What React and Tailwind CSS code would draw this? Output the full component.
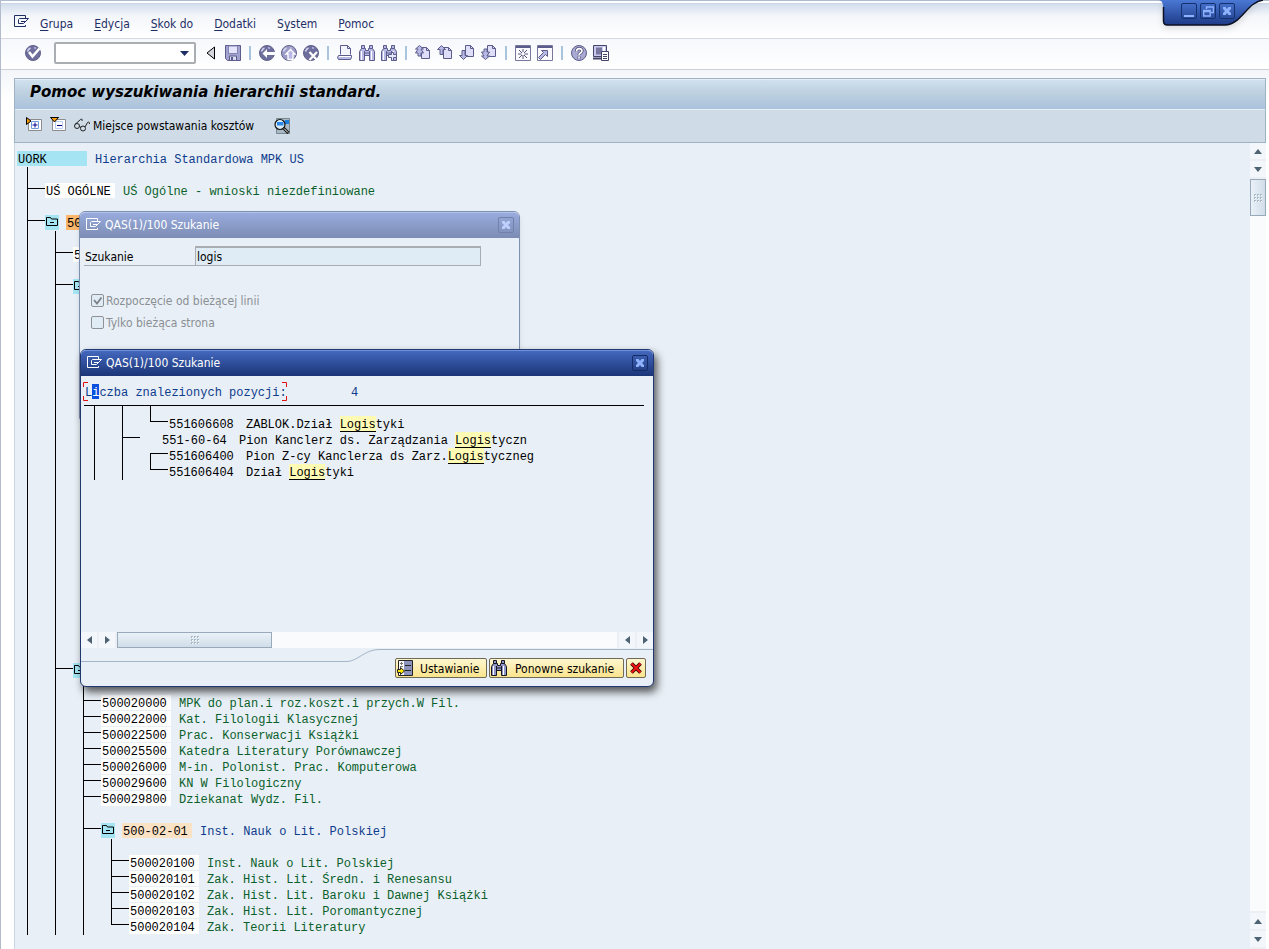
// src/App.jsx
import clsx from 'clsx'

/* ---------- data ---------- */

const MENU = ['Grupa', 'Edycja', 'Skok do', 'Dodatki', 'System', 'Pomoc']

// guides: '|' line, '+' branch, 'L' last branch, 'r' first branch, ' ' empty
const repeat = (n, row) => Array.from({ length: n }, () => row)

const TREE = [
  { guides: '', kind: 'root', code: 'UORK', text: 'Hierarchia Standardowa MPK US' },
  { guides: '|' },
  { guides: '+', kind: 'leaf', code: 'UŚ OGÓLNE', text: 'UŚ Ogólne - wnioski niezdefiniowane' },
  { guides: '|' },
  { guides: '+', kind: 'group', code: '50', tone: 'bg-[#fdb76c]' },
  { guides: '||' },
  { guides: '|+', kind: 'leaf', code: '5' },
  { guides: '||' },
  { guides: '|+', kind: 'group' },
  ...repeat(23, { guides: '||' }),
  { guides: '|+', kind: 'group' },
  { guides: '|||' },
  { guides: '||+', kind: 'leaf', code: '500020000', text: 'MPK do plan.i roz.koszt.i przych.W Fil.' },
  { guides: '||+', kind: 'leaf', code: '500022000', text: 'Kat. Filologii Klasycznej' },
  { guides: '||+', kind: 'leaf', code: '500022500', text: 'Prac. Konserwacji Książki' },
  { guides: '||+', kind: 'leaf', code: '500025500', text: 'Katedra Literatury Porównawczej' },
  { guides: '||+', kind: 'leaf', code: '500026000', text: 'M-in. Polonist. Prac. Komputerowa' },
  { guides: '||+', kind: 'leaf', code: '500029600', text: 'KN W Filologiczny' },
  { guides: '||+', kind: 'leaf', code: '500029800', text: 'Dziekanat Wydz. Fil.' },
  { guides: '|||' },
  { guides: '||+', kind: 'group', code: '500-02-01', text: 'Inst. Nauk o Lit. Polskiej' },
  { guides: '||||' },
  { guides: '|||+', kind: 'leaf', code: '500020100', text: 'Inst. Nauk o Lit. Polskiej' },
  { guides: '|||+', kind: 'leaf', code: '500020101', text: 'Zak. Hist. Lit. Średn. i Renesansu' },
  { guides: '|||+', kind: 'leaf', code: '500020102', text: 'Zak. Hist. Lit. Baroku i Dawnej Książki' },
  { guides: '|||+', kind: 'leaf', code: '500020103', text: 'Zak. Hist. Lit. Poromantycznej' },
  { guides: '|||L', kind: 'leaf', code: '500020104', text: 'Zak. Teorii Literatury' },
]

const HITS = [
  { guides: '||L', code: '551606608', before: 'ZABLOK.Dział ', after: 'tyki' },
  { guides: '|+', code: '551-60-64', before: 'Pion Kanclerz ds. Zarządzania ', after: 'tyczn', indent: true },
  { guides: '||r', code: '551606400', before: 'Pion Z-cy Kanclerza ds Zarz.', after: 'tyczneg' },
  { guides: '||L', code: '551606404', before: 'Dział ', after: 'tyki' },
]

/* ---------- icons ---------- */

function Svg({ w = 16, h = 16, children, className }) {
  return (
    <svg width={w} height={h} viewBox={`0 0 ${w} ${h}`} fill="none" aria-hidden="true" className={clsx('block shrink-0', className)}>
      {children}
    </svg>
  )
}

const INK = '#5c5c8c'
const LILAC = '#b9b9e6'

const SessionIcon = () => (
  <Svg w={16} h={13}>
    <path d="M11.5 3V.5H.5v11h11V10" stroke="currentColor" />
    <path d="M14.5 3.5h-9l-1 1v4h5l5-5M7 6.500h4" stroke="currentColor" />
  </Svg>
)

function Disc({ fill = '#6e6e9c', children }) {
  return (
    <Svg>
      <circle cx="8" cy="8" r="7.500" fill={fill} stroke="#5f5f8a" />
      <path d="M2.500 6.500a5.500 5.500 0 0 1 3-3.500" stroke="#d4d4f0" strokeWidth="1.500" />
      <path d="M9 2.500l2 1" stroke="#b4b4dc" strokeWidth="1.500" />
      {children}
    </Svg>
  )
}

const EnterIcon = () => (
  <Disc>
    <path d="M4 7l3.500 4.500L14.500 3.500" stroke="#fff" strokeWidth="2.600" />
  </Disc>
)
const BackIcon = () => (
  <Disc>
    <path d="M3.500 8.500L8 4v3h8v3H8v3z" fill="#fff" />
  </Disc>
)
const ExitIcon = () => (
  <Disc fill="#9c9cc8">
    <path d="M9.500 4.500l4.500 4.500h-2v5.500H7V9H5z" fill="#b9b9e6" stroke="#fff" strokeWidth="1.300" />
  </Disc>
)
const CancelIcon = () => (
  <Disc>
    <path d="M6.500 7l7.500 8M14 7l-7.500 8" stroke="#fff" strokeWidth="2.200" />
  </Disc>
)
const SaveIcon = () => (
  <Svg>
    <path d="M.5 .5h15v15h-13l-2-2z" fill="#a3a3d0" stroke={INK} />
    <path d="M3.500 1h9v7.500h-9z" fill="#e4e4fb" stroke="#8585b5" />
    <path d="M4.500 11h7v4.500h-7z" fill="#dcdcf5" stroke={INK} />
    <path d="M6 12h2v3H6z" fill={INK} />
  </Svg>
)
const PrintIcon = () => (
  <Svg>
    <path d="M3.500 9.500V.5h7l3 3v6" fill="#f4f4ff" stroke={INK} />
    <path d="M10.500 .5v3h3" stroke={INK} />
    <path d="M1.500 10.500h13v2l-1 2h-12l-1-2z" fill={LILAC} stroke={INK} />
    <path d="M2 11.500h12" stroke="#fff" />
  </Svg>
)

function Binoculars({ ink = INK, fill = LILAC, children }) {
  return (
    <Svg>
      <path d="M2.500 .5h3v3h1v2h3v-2h1v-3h3v3l2 3v9h-5v-5h-5v5h-5v-9l2-3z" fill={fill} stroke={ink} />
      <path d="M2.500 3.500h3M10.500 3.500h3M5.500 6v5M10.500 6v5M6 8h4" stroke={ink} />
      <path d="M2.500 6v9M12.500 6v9" stroke="#fff" />
      {children}
    </Svg>
  )
}
const FindNextIcon = () => (
  <Binoculars>
    <path d="M10.500 7.500h2v2h3v3h-3v3h-2v-3h-3v-3h3z" fill="#e6e6ff" stroke={INK} />
  </Binoculars>
)

function PageIcon({ arrows, right }) {
  return (
    <Svg>
      <path
        d={right ? 'M6.500 .5h5l3 3v8h-8z' : 'M6.500 2.500h5l3 3v8h-8z'}
        fill="#dedef8"
        stroke={INK}
      />
      <path d={right ? 'M11.500 .5v3h3' : 'M11.500 2.500v3h3'} stroke={INK} />
      <path d={arrows} fill={LILAC} stroke={INK} />
    </Svg>
  )
}
const FirstPageIcon = () => <PageIcon arrows="M4.500 .5l4 3.500h-2.500l2.500 4h-2.500v3H3V8H.5L3 4H.5z" />
const PrevPageIcon = () => <PageIcon arrows="M4.500 .5l4 4H6v5H3v-5H.5z" />
const NextPageIcon = () => <PageIcon right arrows="M4.500 14.500l4-4H6v-5H3v5H.5z" />
const LastPageIcon = () => <PageIcon right arrows="M4.500 14.500l4-3.500h-2.500l2.500-4h-2.500v-3H3v3H.5L3 11H.5z" />

const NewSessionIcon = () => (
  <Svg>
    <path d="M.5 .5h15v15H.5z" fill="#fafaff" stroke="#77779c" />
    <path d="M1 1h14v2H1z" fill="#5c5c8c" />
    <path d="M8 4v3M8 10v4M3 9h3.500M9.500 9H13M4 5l3 3M12 5L9 8M4 13l3-3M12 13l-3-3" stroke="#55557f" />
  </Svg>
)
const ShortcutIcon = () => (
  <Svg>
    <path d="M.5 .5h15v15H.5z" fill="#fafaff" stroke="#77779c" />
    <path d="M1 1h14v2H1z" fill="#5c5c8c" />
    <path d="M4.500 5.500h6v6l-2-2-5 5-2-2 5-5z" fill={LILAC} stroke={INK} />
  </Svg>
)
const HelpIcon = () => (
  <Svg>
    <circle cx="8" cy="8" r="7.500" fill="#a9a9d2" stroke={INK} />
    <path d="M5.500 6.500c0-4 5.500-3.500 5.500-.5C11 8 8 8 8 10M8 11.500v2" stroke="#4d4d78" strokeWidth="3.200" />
    <path d="M5.500 6.500c0-4 5.500-3.500 5.500-.5C11 8 8 8 8 10M8 11.500v2" stroke="#fff" strokeWidth="1.600" />
  </Svg>
)
const LayoutIcon = () => (
  <Svg>
    <path d="M.5 .5h13v11H.5z" fill="#c9c9ee" stroke="#44446a" />
    <path d="M3 2.500h6v7H3z" fill="#77779f" />
    <path d="M10 2h2v8h-2z" fill="#fff" />
    <path d="M0 13.500h8" stroke="#44446a" strokeWidth="2" />
    <path d="M8.500 6.500h7v9h-7z" fill="#fff" stroke="#44446a" />
    <path d="M10 9.500h4M10 11.500h4M10 13.500h4" stroke="#44446a" />
  </Svg>
)

const ExpandIcon = () => (
  <Svg>
    <path d="M2.500 2.500h13v11h-13z" fill="#fff" stroke="#8c8c8c" />
    <path d="M5.500 4.500h7v7h-7z" stroke="#6d9be0" />
    <path d="M9 5.500v5M6.500 8h5" stroke="#00008a" />
    <path d="M.5 .5v7L5 4z" fill="#f59a00" stroke="#000" />
  </Svg>
)
const CollapseIcon = () => (
  <Svg>
    <path d="M2.500 2.500h13v11h-13z" fill="#fff" stroke="#8c8c8c" />
    <path d="M5.500 4.500h7v7h-7z" stroke="#b9cdf0" />
    <path d="M7 8.500h5" stroke="#00008a" />
    <path d="M.5 .5h8l-4 4.500z" fill="#f59a00" stroke="#000" />
  </Svg>
)
const GlassesIcon = () => (
  <Svg>
    <circle cx="3" cy="8" r="2.500" stroke="#222" />
    <circle cx="9" cy="10.500" r="2.500" stroke="#222" />
    <path d="M1 6.500l5.500-5c1-1 2-.5 1.500 1.500M11 9l2.500-4.500c1-1 2-.5 2 1.500M5.500 8.500l1.500 1" stroke="#222" />
  </Svg>
)
const MagnifierIcon = () => (
  <Svg>
    <path d="M2.500 .5h13v15h-13z" fill="#a9bac6" stroke="#7c868e" />
    <path d="M11 2h4v4h-4z" fill="#1b7fe0" />
    <circle cx="6" cy="6.500" r="5" fill="#d8ecfa" stroke="#111" strokeWidth="1.200" />
    <path d="M3 4h6.500v3.500H3z" fill="#2a86e8" />
    <path d="M9.500 10l5 5" stroke="#111" strokeWidth="3" />
    <path d="M10 10.500l4 4" stroke="#fff" />
  </Svg>
)
const FolderIcon = () => (
  <Svg w={12} h={9}>
    <path d="M.5 8.500v-8h4l1 1.500h6v6.500z" stroke="#000" />
    <path d="M4 5.500h4" stroke="#000" />
  </Svg>
)
const SettingsIcon = () => (
  <Svg>
    <path d="M1.500 .5h14v15h-14z" fill="#fff" stroke="#222" />
    <path d="M7 1h8v14H7z" fill="#8c93bd" />
    <path d="M8 5.500h6M8 10.500h6" stroke="#222" />
    <path d="M3 3.500h3M4.500 2v3M3 6.500h3" stroke="#777" />
    <path d="M.5 9.500h3v-2l4 3.500-4 3.500v-2h-3z" fill="#ffe600" stroke="#222" />
  </Svg>
)
const RedCrossIcon = () => (
  <Svg w={12} h={12}>
    <path d="M1.500 1.500l9 9M10.500 1.500l-9 9" stroke="#3c0000" strokeWidth="3.800" />
    <path d="M1.500 1.500l9 9M10.500 1.500l-9 9" stroke="#f01414" strokeWidth="2" />
  </Svg>
)
const CrossIcon = () => (
  <Svg w={8} h={8}>
    <path d="M0 0h2.500L4 2l1.500-2H8v2L6 4l2 2v2H5.500L4 6 2.500 8H0V6l2-2-2-2z" fill="currentColor" />
  </Svg>
)

const ARROWS = {
  up: 'M4 0L8 5H0z',
  down: 'M0 0h8L4 5z',
  left: 'M5 0v8L0 4z',
  right: 'M0 0v8l5-4z',
}

/* ---------- small parts ---------- */

function IconButton({ label, children }) {
  return (
    <button type="button" aria-label={label} className="shrink-0">
      {children}
    </button>
  )
}

const Divider = () => <span className="mx-0.5 h-3.5 w-0.5 shrink-0 bg-[#a9c5de]" />

function ArrowButton({ dir, label }) {
  const side = dir === 'left' || dir === 'right'
  return (
    <button
      type="button"
      aria-label={label}
      className="flex size-4 shrink-0 items-center justify-center bg-[#f3f6fa] text-[#4d6272]"
    >
      <Svg w={side ? 5 : 8} h={side ? 8 : 5}>
        <path d={ARROWS[dir]} fill="currentColor" />
      </Svg>
    </button>
  )
}

function Grip() {
  return (
    <span className="grid grid-cols-3 gap-px">
      {Array.from({ length: 9 }, (_, i) => (
        <span key={i} className="size-0.5 border-t border-l border-[#a6b8c6] bg-white" />
      ))}
    </span>
  )
}

function Guide({ type }) {
  return (
    <span className="flex h-full w-7 shrink-0 pl-2.5">
      {type === '|' && <span className="flex-1 border-l border-black" />}
      {type === '+' && (
        <span className="flex-1 border-l border-black">
          <span className="block h-1.5 border-b border-black" />
        </span>
      )}
      {type === 'L' && <span className="h-1.5 flex-1 border-b border-l border-black" />}
      {type === 'r' && <span className="mt-[5px] flex-1 border-t border-l border-black" />}
    </span>
  )
}

function TreeRow({ guides, kind, code, text, tone = 'bg-[#fbe2c4]' }) {
  return (
    <li className="flex h-4 leading-[18px] whitespace-pre">
      {guides.split('').map((g, i) => (
        <Guide key={i} type={g} />
      ))}
      {kind === 'group' && (
        <button type="button" aria-label="Zwiń" className="mr-[7px] flex h-[15px] w-3.5 shrink-0 justify-center bg-[#a5e5f3] pt-0.5">
          <FolderIcon />
        </button>
      )}
      {kind && (
        <span
          className={clsx(
            'mr-2 h-[15px] w-[70px] shrink-0 pl-px text-black',
            kind === 'root' && 'bg-[#a5e5f3]',
            kind === 'leaf' && 'bg-white',
            kind === 'group' && tone,
          )}
        >
          {code}
        </span>
      )}
      {text && <span className={kind === 'leaf' ? 'text-[#0b5f2b]' : 'text-[#0f3c8c]'}>{text}</span>}
    </li>
  )
}

function HitRow({ guides, code, before, after, indent }) {
  return (
    <li className="flex h-4 leading-[18px] whitespace-pre">
      {guides.split('').map((g, i) => (
        <Guide key={i} type={g} />
      ))}
      <span className={clsx('w-[77px] shrink-0 pl-px', indent && 'ml-[21px]')}>{code}</span>
      <span className="flex h-4 pl-px">
        {before}
        <mark className="h-4 border-b border-black bg-[#fffbb5] text-black">Logis</mark>
        {after}
      </span>
    </li>
  )
}

function TitleBar({ active }) {
  return (
    <header
      className={clsx(
        'flex h-[26px] items-center gap-[3px] rounded-t-[5px] border-t pr-[5px] pb-0.5 pl-1.5 text-white',
        active
          ? 'border-[#6f93da] bg-linear-to-b from-[#4468be] to-[#1b3577]'
          : 'border-[#b3c2e6] bg-linear-to-b from-[#98abdd] to-[#7c8cb3]',
      )}
    >
      <SessionIcon />
      <h2 className="flex-1">QAS(1)/100 Szukanie</h2>
      <button
        type="button"
        aria-label="Zamknij"
        className={clsx(
          'flex size-4 items-center justify-center rounded-xs border',
          active ? 'border-[#132c68] text-[#8fb2ff]' : 'border-[#7082ac] text-[#bed0ff]',
        )}
      >
        <CrossIcon />
      </button>
    </header>
  )
}

function CheckBox({ label, checked }) {
  return (
    <label className="flex h-4 items-center gap-0.5">
      <span className="relative size-[13px]">
        <input
          type="checkbox"
          defaultChecked={checked}
          disabled
          className="block size-full appearance-none rounded-xs border border-[#8e9296] bg-[#dfebf5]"
        />
        {checked && (
          <Svg w={13} h={13} className="absolute inset-0">
            <path d="M3 6l3 3.500 4.500-6" stroke="#7d8186" strokeWidth="1.800" />
          </Svg>
        )}
      </span>
      <span className="pt-px">{label}</span>
    </label>
  )
}

/* ---------- dialogs ---------- */

function SearchDialog() {
  return (
    <section className="absolute top-[211px] left-[78px] h-[208px] w-[441px] rounded-t-md border border-[#7f8fb2] bg-[#e8eff6] shadow-md">
      <TitleBar />
      <div className="mt-2 ml-1 flex h-5 w-[397px]">
        <label htmlFor="term" className="w-[111px] border-b border-[#a9adb1] pl-px leading-[22px] text-black">
          Szukanie
        </label>
        <input
          id="term"
          defaultValue="logis"
          className="min-w-0 flex-1 border border-t-2 border-[#a9adb1] bg-[#dfebf5] pl-px text-black outline-none"
        />
      </div>
      <div className="mt-[26px] ml-[11px] flex flex-col gap-1.5 text-[#8b8f94]">
        <CheckBox label="Rozpoczęcie od bieżącej linii" checked />
        <CheckBox label="Tylko bieżąca strona" />
      </div>
    </section>
  )
}

function YellowButton({ children, className, ...rest }) {
  return (
    <button
      type="button"
      className={clsx(
        'flex h-5 items-center rounded-xs border border-[#6f6a55] bg-linear-to-b from-[#fdf6cf] to-[#fbe48c] text-black',
        className,
      )}
      {...rest}
    >
      {children}
    </button>
  )
}

function ResultDialog() {
  return (
    <section className="absolute top-[349px] left-[79px] flex h-[338px] w-[574px] flex-col rounded-md border border-[#20386f] bg-[#e8eff6] shadow-[3px_5px_9px_rgba(0,0,0,0.65)]">
      <TitleBar active />
      <div className="flex-1 px-[3px] pt-2 font-['Liberation_Mono',monospace]">
        <div className="flex h-[21px] leading-[18px] whitespace-pre text-[#0f3c8c]">
          <div className="relative flex h-[15px] w-[204px] pl-px">
            L<span className="bg-[#0a50e0] text-white">i</span>czba znalezionych pozycji:
            <Svg w={204} h={19} className="absolute -top-0.5 -left-px">
              <path d="M5 .5H.5V5M.5 14v4.500H5M199 .5h4.500V5M203.500 14v4.500H199" stroke="#e01010" />
            </Svg>
          </div>
          <p className="pl-[63px]">4</p>
        </div>
        <ul className="mr-1.5 border-t border-black text-black">
          <li className="flex h-2.5">
            <Guide type="|" />
            <Guide type="|" />
            <Guide type="|" />
          </li>
          {HITS.map((hit) => (
            <HitRow key={hit.code} {...hit} />
          ))}
        </ul>
      </div>

      <div className="flex h-4 gap-0.5 bg-[#eceff3]">
        <ArrowButton dir="left" label="W lewo" />
        <ArrowButton dir="right" label="W prawo" />
        <div className="flex flex-1 bg-[#fafbfc]">
          <div className="flex w-[155px] items-center justify-center border border-[#98aaba] bg-linear-to-b from-[#eaf1f8] to-[#d0dde8]">
            <Grip />
          </div>
        </div>
        <ArrowButton dir="left" label="W lewo" />
        <ArrowButton dir="right" label="W prawo" />
      </div>

      <footer className="flex h-[38px]">
        <div className="mt-px h-[13px] flex-1 border-b border-[#a3b4c6]" />
        <Svg w={32} h={14} className="mt-px">
          <path d="M0 12.500c10 0 18-12 32-12" stroke="#a3b4c6" />
        </Svg>
        <div className="mt-px flex gap-0.5 border-t border-[#a3b4c6] pt-2 pr-[7px] pl-4">
          <YellowButton className="w-[92px] gap-[7px] pl-px">
            <SettingsIcon />
            <span className="pt-px">Ustawianie</span>
          </YellowButton>
          <YellowButton className="w-[135px] gap-2 pl-px">
            <Binoculars ink="#15151f" fill="#8f95c6" />
            <span className="pt-px">Ponowne szukanie</span>
          </YellowButton>
          <YellowButton className="w-5 justify-center" aria-label="Anuluj">
            <RedCrossIcon />
          </YellowButton>
        </div>
      </footer>
    </section>
  )
}

/* ---------- frame ---------- */

function WindowControls() {
  return (
    <div className="absolute top-0 right-0 h-7 w-[110px]">
      <Svg w={110} h={28} className="overflow-visible drop-shadow-md">
        <defs>
          <linearGradient id="tab" x1="0" y1="0" x2="0" y2="1">
            <stop offset="0" stopColor="#4a78d4" />
            <stop offset="1" stopColor="#1d3a86" />
          </linearGradient>
        </defs>
        <path d="M0 0c3 1 4 3 4 7v14c0 2 1 4 4 4h58c16 0 22-23 38-25z" fill="url(#tab)" />
        <path d="M4.500 7v14c0 2 1 4 4 4h57.500c16 0 22-23 38-25" stroke="#0b1024" strokeWidth="1.500" />
      </Svg>
      <div className="absolute top-[3px] left-[22px] flex gap-[3px] text-[#8fb2ff]">
        <button type="button" aria-label="Minimalizuj" className="flex size-4 items-end justify-center rounded-xs border border-[#14306f] pb-px">
          <span className="h-0.5 w-2.5 bg-current" />
        </button>
        <button type="button" aria-label="Przywróć" className="flex size-4 items-center justify-center rounded-xs border border-[#14306f]">
          <Svg w={11} h={11}>
            <path d="M3.500 3V1h7v5.500H8" stroke="currentColor" strokeWidth="1.500" />
            <path d="M.7 4.500h6.500v5.500H.7zM.7 5.500h6.500" stroke="currentColor" strokeWidth="1.400" />
          </Svg>
        </button>
        <button type="button" aria-label="Zamknij" className="flex size-4 items-center justify-center rounded-xs border border-[#14306f]">
          <CrossIcon />
        </button>
      </div>
    </div>
  )
}

function Toolbar() {
  return (
    <div className="flex h-[31px] items-center gap-1.5 border-b border-[#cdd0d9] bg-linear-to-b from-[#f6f8fc] to-white pb-0.5 pl-6">
      <IconButton label="Enter">
        <EnterIcon />
      </IconButton>
      <div className="relative ml-[7px] flex w-[142px]">
        <select aria-label="Polecenie" className="h-[22px] w-full appearance-none rounded-xs border-2 border-[#a9aeb3] bg-white outline-none" />
        <Svg w={9} h={5} className="pointer-events-none absolute top-[9px] right-[7px]">
          <path d="M0 0h9L4.500 5z" fill="#1f2f66" />
        </Svg>
      </div>
      <button type="button" aria-label="Zwiń pole" className="mr-1 ml-1">
        <Svg w={9} h={14}>
          <path d="M8.500 1v12L1 7z" fill="#d5d8de" stroke="#000" />
        </Svg>
      </button>
      <IconButton label="Zapisz"><SaveIcon /></IconButton>
      <Divider />
      <IconButton label="Wstecz"><BackIcon /></IconButton>
      <IconButton label="Koniec"><ExitIcon /></IconButton>
      <IconButton label="Anuluj"><CancelIcon /></IconButton>
      <Divider />
      <IconButton label="Drukuj"><PrintIcon /></IconButton>
      <IconButton label="Szukaj"><Binoculars /></IconButton>
      <IconButton label="Szukaj dalej"><FindNextIcon /></IconButton>
      <Divider />
      <IconButton label="Pierwsza strona"><FirstPageIcon /></IconButton>
      <IconButton label="Poprzednia strona"><PrevPageIcon /></IconButton>
      <IconButton label="Następna strona"><NextPageIcon /></IconButton>
      <IconButton label="Ostatnia strona"><LastPageIcon /></IconButton>
      <Divider />
      <IconButton label="Nowa sesja"><NewSessionIcon /></IconButton>
      <IconButton label="Utwórz skrót"><ShortcutIcon /></IconButton>
      <Divider />
      <IconButton label="Pomoc"><HelpIcon /></IconButton>
      <IconButton label="Układ"><LayoutIcon /></IconButton>
    </div>
  )
}

export default function App() {
  return (
    <div className="relative flex min-h-screen flex-col overflow-hidden border-l border-[#b3bccd] bg-white font-['DejaVu_Sans_Condensed','DejaVu_Sans',sans-serif] text-xs">
      <div className="h-1 border-t border-b border-t-[#aebbcd] border-b-[#cbd6e6] bg-white" />
      <nav className="flex h-[35px] items-center border-b border-[#d5d9e2] bg-linear-to-b from-[#d3deec] via-[#f3f6fa] via-35% to-white pl-[13px] text-[#1f2f66]">
        <button type="button" aria-label="Menu sesji" className="mr-2.5">
          <SessionIcon />
        </button>
        <ul className="flex gap-[21px] pt-1.5">
          {MENU.map((item) => {
            const key = item === 'System' ? 1 : 0
            return (
              <li key={item}>
                <button type="button">
                  {item.slice(0, key)}
                  <span className="underline underline-offset-2">{item[key]}</span>
                  {item.slice(key + 1)}
                </button>
              </li>
            )
          })}
        </ul>
      </nav>
      <Toolbar />

      <div className="flex flex-1 flex-col bg-linear-to-b from-[#f3f5f9] to-white to-[30px] pt-2 pr-[3px] pl-[13px]">
        <div className="border border-[#9fb2c6] bg-[#cfdce7]">
          <h1 className="flex h-[31px] items-center border-t border-b border-[#e6eff6] bg-linear-to-b from-[#d0e0ed] via-[#bccfdf] to-[#abc2dd] pb-1 pl-[15px] font-['DejaVu_Sans',sans-serif] text-[15px] font-bold text-black italic">
            Pomoc wyszukiwania hierarchii standard.
          </h1>
          <div className="flex h-8 items-center pl-[11px] text-black">
            <button type="button" aria-label="Rozwiń" className="mr-2 mb-0.5">
              <ExpandIcon />
            </button>
            <button type="button" aria-label="Zwiń" className="mr-2 mb-0.5">
              <CollapseIcon />
            </button>
            <button type="button" className="mr-5 flex items-center gap-[3px]">
              <GlassesIcon />
              Miejsce powstawania kosztów
            </button>
            <IconButton label="Szczegóły">
              <MagnifierIcon />
            </IconButton>
          </div>
        </div>

        <main className="flex flex-1 border-l border-[#ccd6e2] bg-[#e8eff6]">
          <ul className="flex-1 pt-2 pl-0.5 font-['Liberation_Mono',monospace]">
            {TREE.map((row, i) => (
              <TreeRow key={i} {...row} />
            ))}
          </ul>
          <div className="flex w-4 flex-col gap-0.5 bg-[#eceff3] pb-0.5">
            <ArrowButton dir="up" label="W górę" />
            <ArrowButton dir="down" label="W dół" />
            <div className="flex-1 bg-[#fafbfc]">
              <div className="flex h-[37px] items-center justify-center border border-[#98aaba] bg-linear-to-r from-[#eaf1f8] to-[#d0dde8]">
                <Grip />
              </div>
            </div>
            <ArrowButton dir="up" label="W górę" />
            <ArrowButton dir="down" label="W dół" />
          </div>
        </main>
      </div>

      <WindowControls />
      <SearchDialog />
      <ResultDialog />
    </div>
  )
}
